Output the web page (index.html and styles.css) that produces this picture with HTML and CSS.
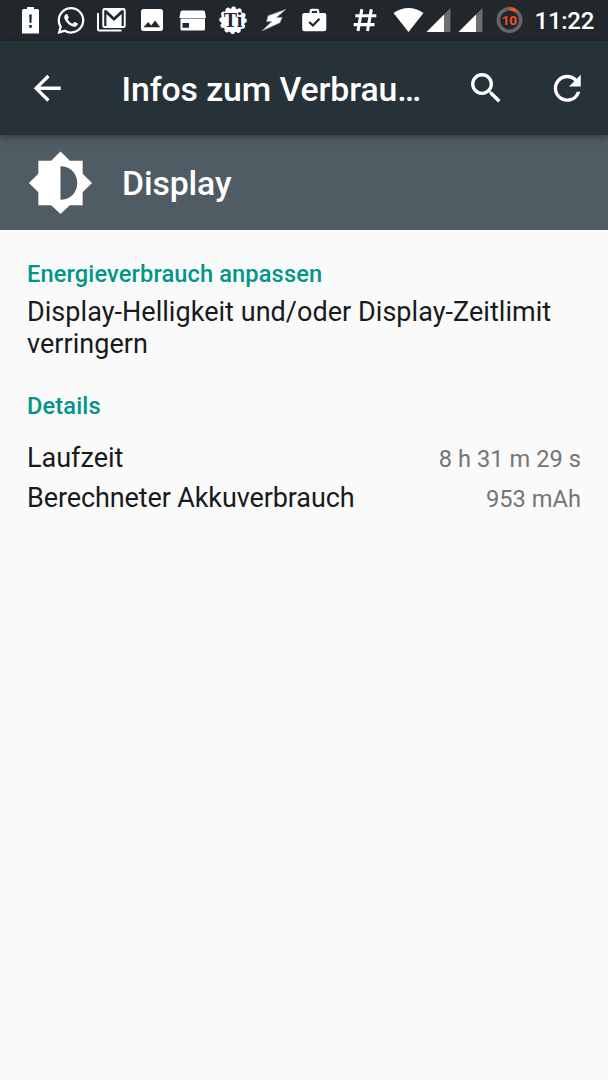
FILE: index.html
```html
<!DOCTYPE html>
<html lang="de">
<head>
<meta charset="utf-8">
<title>Infos zum Verbrauch</title>
<link rel="stylesheet" href="styles.css">
</head>
<body>
<div class="status-bar">
  <svg width="40" height="41" viewBox="10 0 40 41"><path fill-rule="evenodd" d="M27 7h7v2h3.500q1.500 0 1.500 1.500V33.500H22V10.500Q22 9 23.500 9H27zM29.200 14.500l.4 8.500h1.800l.4-8.500zM29.200 25v2.800h2.600v-2.800z"/></svg>
  <svg width="41" height="41" viewBox="50 0 41 41"><g transform="translate(57.500 7) scale(1.12)"><path d="M17.472 14.382c-.297-.149-1.758-.867-2.030-.967-.273-.099-.471-.148-.67.150-.197.297-.767.966-.940 1.164-.173.199-.347.223-.644.075-.297-.150-1.255-.463-2.390-1.475-.883-.788-1.480-1.761-1.653-2.059-.173-.297-.018-.458.130-.606.134-.133.298-.347.446-.520.149-.174.198-.298.298-.497.099-.198.050-.371-.025-.520-.075-.149-.669-1.612-.916-2.207-.242-.579-.487-.500-.669-.510-.173-.008-.371-.010-.570-.010-.198 0-.520.074-.792.372-.272.297-1.040 1.016-1.040 2.479 0 1.462 1.065 2.875 1.213 3.074.149.198 2.096 3.200 5.077 4.487.709.306 1.262.489 1.694.625.712.227 1.360.195 1.871.118.571-.085 1.758-.719 2.006-1.413.248-.694.248-1.289.173-1.413-.074-.124-.272-.198-.570-.347m-5.421 7.403h-.004a9.870 9.870 0 0 1-5.031-1.378l-.361-.214-3.741.982.998-3.648-.235-.374a9.860 9.860 0 0 1-1.510-5.260c.001-5.450 4.436-9.884 9.888-9.884a9.884 9.884 0 0 1 9.885 9.892c-.002 5.450-4.437 9.884-9.888 9.884m8.413-18.297A11.815 11.815 0 0 0 12.050 0C5.495 0 .160 5.335.157 11.892c0 2.096.547 4.142 1.588 5.945L.057 24l6.305-1.654a11.882 11.882 0 0 0 5.683 1.448h.005c6.554 0 11.890-5.335 11.893-11.893a11.821 11.821 0 0 0-3.480-8.413"/></g></svg>
  <svg width="40" height="41" viewBox="91 0 40 41"><path fill-rule="evenodd" d="M104.500 8h19q2.200 0 2.200 2.200v15.600q0 2.200-2.200 2.200h-19q-2.200 0-2.200-2.200V10.200Q102.300 8 104.500 8zM104.200 10.300V26h2.200V14l7.600 7 7.600-7V26h2.200V10.300h-2.300L114 17.200l-7.500-6.900z"/><path d="M97 13h2v16.500h22.500v2H99q-2 0-2-2z"/></svg>
  <svg width="41" height="41" viewBox="131 0 41 41"><path fill-rule="evenodd" d="M143.500 9h17q2.500 0 2.500 2.500v17q0 2.500-2.500 2.500h-17q-2.500 0-2.500-2.500v-17Q141 9 143.500 9zM143.500 27.300h16.700l-5.100-6.700-3.900 5-3-3.700z"/></svg>
  <svg width="40" height="41" viewBox="172 0 40 41"><path d="M182 10.500h21.500q1 0 1.300 1l1 5v1.500h-26.300v-1.500l1.200-5q.3-1 1.300-1z"/><path class="lip" d="M180.500 18h24.500v1h-24.500z"/><path fill-rule="evenodd" d="M180.500 19h24.500v10q0 1.500-1.500 1.500h-21.500q-1.500 0-1.500-1.500zM182.500 23v4.700h6.500V23z"/></svg>
  <svg width="41" height="41" viewBox="212 0 41 41"><circle cx="233" cy="20.300" r="12"/><circle cx="233" cy="20.300" r="11.800" fill="none" stroke="#fff" stroke-width="4" stroke-linecap="round" stroke-dasharray="0.600 5.579"/><text class="titanium" x="233" y="26.500">Ti</text></svg>
  <svg width="40" height="41" viewBox="253 0 40 41"><path class="bolt" d="M286 9.300L268 15.800l-1.500 6 5.300-.3L261.800 31l18.200-8.200 2.200-5.500-5.700.3z"/></svg>
  <svg width="41" height="41" viewBox="293 0 41 41"><path fill-rule="evenodd" d="M304.500 13h5v-1.800q0-2.400 2.400-2.400h5q2.400 0 2.400 2.400V13h5q2 0 2 2v14q0 2.300-2.300 2.300H304.500q-2.300 0-2.300-2.300V15q0-2 2.300-2zM311.800 13h5.200v-2h-5.200zM308.400 22.800l4.600 4.300 7.300-7.500-1.600-1.500-5.800 5.900-3-2.800z"/></svg>
  <svg class="spaced" width="40" height="41" viewBox="344 0 40 41"><path d="M361.800 9.300l-3.800 21.700M371.300 9.300L367.500 31M355.300 15.800h21M353.700 24.600h20.800" fill="none" stroke="#fff" stroke-width="3.100"/></svg>
  <svg width="42" height="41" viewBox="384 0 42 41"><path d="M393.500 13Q408.500 3 423.500 13L408.500 32z"/></svg>
  <svg width="64" height="41" viewBox="426 0 64 41"><path class="signal-off" d="M450.500 8v24h-6.500V14.500zM482.500 8v24h-6.500V14.500z"/><path d="M444 14.500V32h-17.500zM476 14.500V32h-17.500z"/></svg>
  <svg width="40" height="41" viewBox="490 0 40 41"><circle class="ring" cx="509.500" cy="20" r="11.200"/><path class="ring charge" d="M509.500 8.800a11.200 11.200 0 0 1 6.800 2.300"/><text class="percent" x="509.300" y="25">10</text></svg>
  <span class="clock">11:22</span>
</div>
<header class="app-bar">
  <svg class="icon" viewBox="0 0 24 24"><path d="M20 11H7.830l5.590-5.590L12 4l-8 8 8 8 1.410-1.410L7.830 13H20v-2z"/></svg>
  <h1 class="title">Infos zum Verbrau…</h1>
  <svg class="icon search" viewBox="0 0 24 24"><path d="M15.500 14h-.790l-.280-.270A6.471 6.471 0 0 0 16 9.500 6.500 6.500 0 1 0 9.500 16c1.610 0 3.090-.590 4.230-1.570l.270.280v.790l5 4.990L20.490 19l-4.990-5zm-6 0C7.010 14 5 11.990 5 9.500S7.010 5 9.500 5 14 7.010 14 9.500 11.990 14 9.500 14z"/></svg>
  <svg class="icon refresh" viewBox="0 0 24 24"><path d="M17.650 6.350A7.958 7.958 0 0 0 12 4c-4.420 0-7.990 3.580-7.990 8s3.570 8 7.990 8c3.730 0 6.840-2.550 7.730-6h-2.080A5.990 5.990 0 0 1 12 18c-3.310 0-6-2.690-6-6s2.690-6 6-6c1.660 0 3.140.690 4.220 1.780L13 11h7V4l-2.350 2.350z"/></svg>
</header>
<section class="banner">
  <svg class="brightness" viewBox="0 0 66 66"><path fill-rule="evenodd" d="M33 1.500L42.500 11H55.500V24L65 33.500 55.500 43V56H42.500L33 65 23.500 56H10.500V43L1 33.500 10.500 24V11H23.500zM33 16.500V50.500C43 50.500 50 43 50 33.500S43 16.500 33 16.500z"/></svg>
  <h2 class="banner-title">Display</h2>
</section>
<main class="content">
  <h3 class="section-title">Energieverbrauch anpassen</h3>
  <p class="hint">Display-Helligkeit und/oder Display-Zeitlimit verringern</p>
  <h3 class="section-title details">Details</h3>
  <dl class="list">
    <div class="row"><dt>Laufzeit</dt><dd>8 h 31 m 29 s</dd></div>
    <div class="row"><dt class="tight">Berechneter Akkuverbrauch</dt><dd>953 mAh</dd></div>
  </dl>
</main>
</body>
</html>
```
FILE: styles.css
```css
* { box-sizing: border-box; margin: 0; padding: 0; }
body { width: 608px; height: 1080px; overflow: hidden; background: #fafafa; color: #171b1d; font-family: Roboto, sans-serif; }
svg { display: block; flex: none; fill: #fff; }
.status-bar { display: flex; height: 41px; padding-left: 10px; background: #21272b; }
.spaced { margin-left: 10px; }
.signal-off { fill: #6b6f72; }
.lip { fill: #8c9092; }
.bolt { stroke: #8c9092; stroke-width: .6; }
.titanium { fill: #21272b; font: bold 20px "Liberation Serif", serif; text-anchor: middle; }
.ring { fill: none; stroke: #626669; stroke-width: 3.6; }
.charge { stroke: #f4511e; }
.percent { fill: #f4511e; font: 700 13.5px Roboto, sans-serif; text-anchor: middle; letter-spacing: -.3px; }
.clock { margin-left: 4.500px; color: #fff; font-size: 24px; font-weight: 500; line-height: 43px; letter-spacing: -.25px; white-space: nowrap; }
.app-bar { position: relative; display: flex; align-items: center; height: 94px; padding-left: 27px; background: #273238; box-shadow: 0 2px 7px rgba(0, 0, 0, .4); }
.icon { width: 40.5px; height: 40.5px; }
.title { width: 304px; margin-left: 54px; color: #fff; font-size: 33.800px; font-weight: 500; line-height: 42px; letter-spacing: -.1px; white-space: nowrap; padding-top: 3px; }
.search { margin-left: 40px; }
.refresh { margin-left: 40.500px; }
.banner { display: flex; align-items: center; height: 94.500px; padding-left: 28px; background: #4f5c63; }
.brightness { width: 65px; height: 65px; }
.banner-title { margin-left: 29px; color: #fff; font-size: 33.800px; font-weight: 500; line-height: 40px; letter-spacing: -.12px; padding-top: 3px; }
.content { padding: 30px 27px; }
.section-title { color: #009688; font-size: 23.640px; font-weight: 500; line-height: 28px; letter-spacing: .12px; }
.hint { margin-top: 8.500px; font-size: 27px; line-height: 32px; letter-spacing: .04px; }
.details { margin-top: 32px; }
.list { margin-top: 18px; }
.row { display: flex; justify-content: space-between; align-items: center; height: 40px; }
dt { font-size: 27px; line-height: 40px; }
.tight { letter-spacing: -.11px; }
dd { padding-top: 2px; color: #757575; font-size: 23.640px; line-height: 40px; letter-spacing: .04px; }
```
